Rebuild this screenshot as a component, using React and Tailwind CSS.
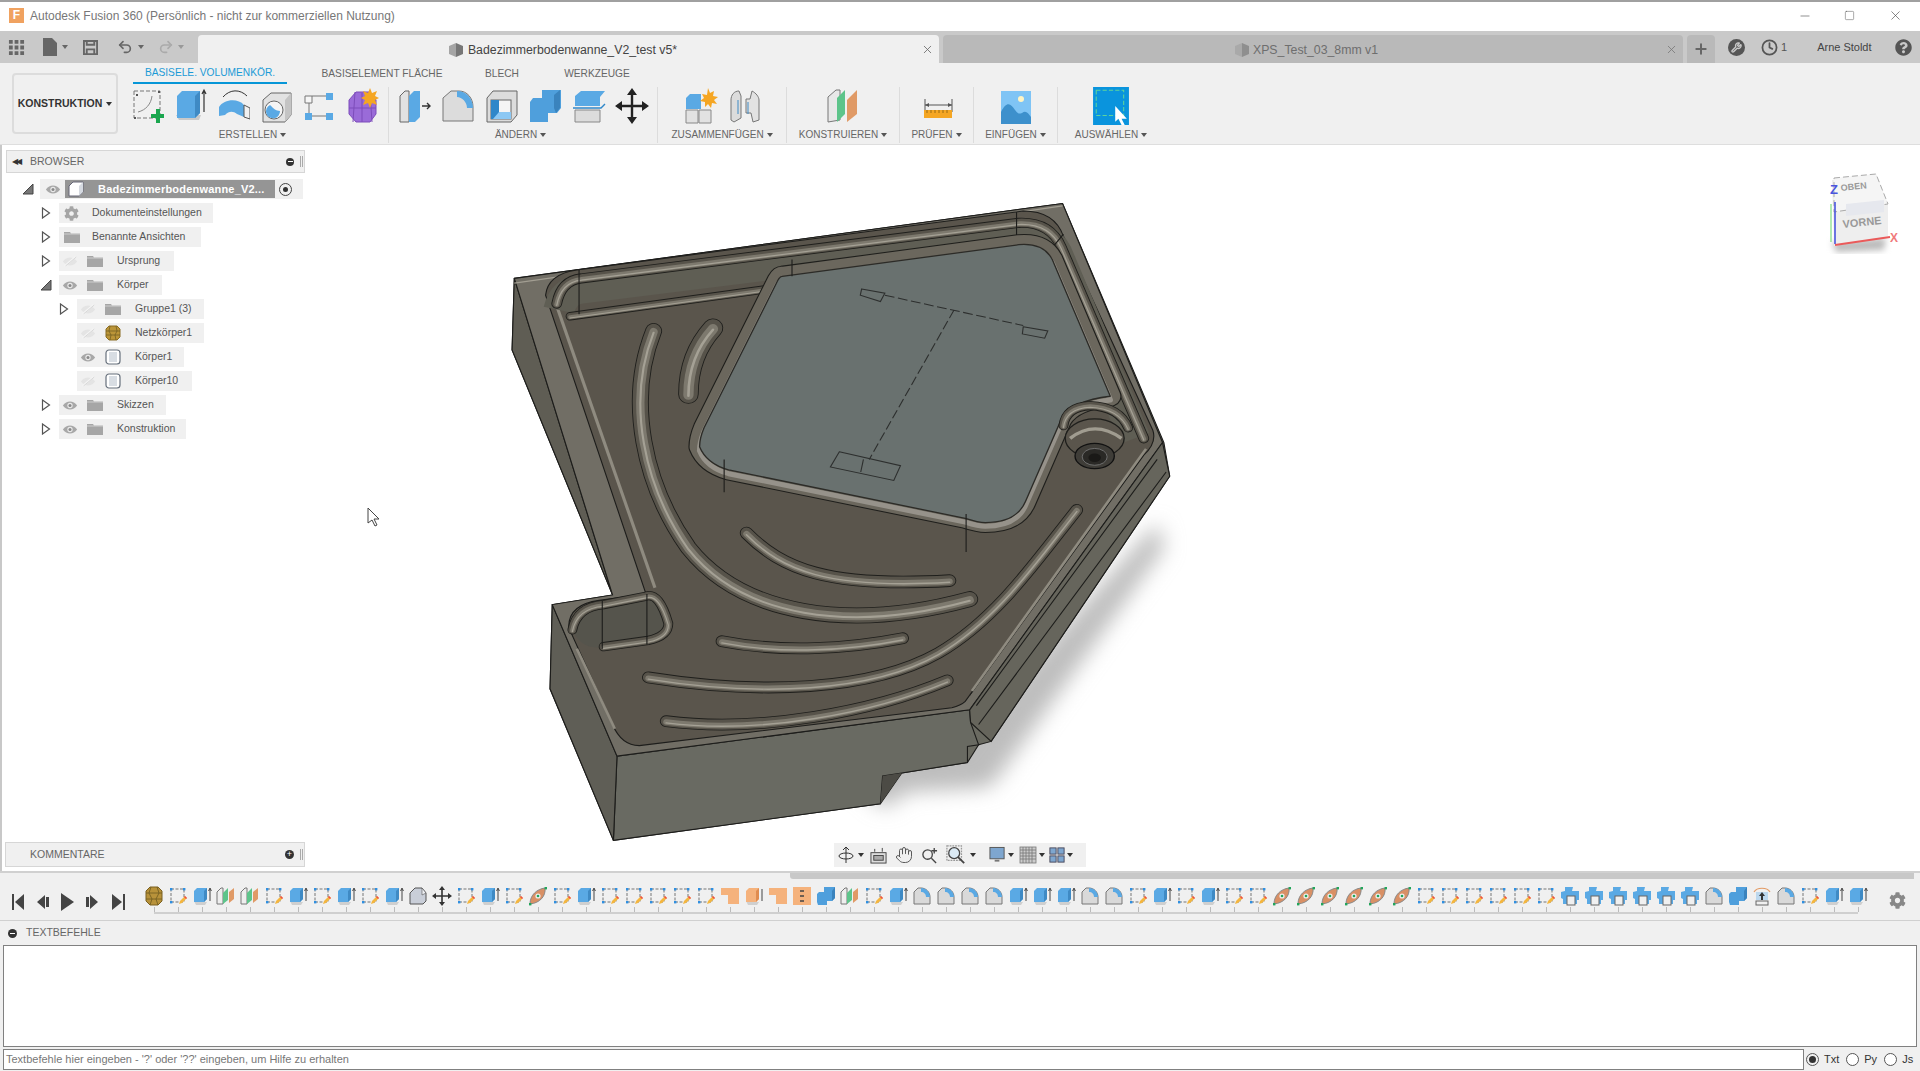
import React from 'react';
import { Minus, Square, X, Plus, Undo2, Redo2, Hand, Wrench, Clock } from 'lucide-react';
import { FaCog, FaQuestionCircle } from 'react-icons/fa';

const SK = 'sketch', EX = 'extrude', PL = 'plane', FI = 'fillet', LO = 'loft', CO = 'combine', CB = 'combineBox', OR = 'orange';

// timeline order, left to right
const timeline = [
  'mesh', SK, EX, PL, PL, SK, EX, SK, EX, SK, EX, 'chamfer', 'move', SK, EX, SK, LO, SK, EX, SK, SK, SK, SK, SK,
  OR, 'orangeBox', OR, 'orangeList', CO, PL, SK, EX, FI, FI, FI, FI, EX, EX, EX, FI, FI, SK, EX, SK, EX, SK, SK,
  LO, LO, LO, LO, LO, LO, SK, SK, SK, SK, SK, SK, CB, CB, CB, CB, CB, CB, FI, CO, 'arch', FI, SK, EX, EX,
];

function TimelineIcon({ kind }) {
  const cls = 'w-[20px] h-[20px] shrink-0';
  if (kind === 'sketch') {
    return (
      <svg viewBox="0 0 20 20" className={cls}>
        <rect x="3" y="3" width="13" height="13" fill="none" stroke="#777" strokeWidth="1" strokeDasharray="3 1.5" />
        <g fill="#2f8fe0">
          <rect x="2" y="2" width="2.4" height="2.4" />
          <rect x="15" y="2" width="2.4" height="2.4" />
          <rect x="2" y="15" width="2.4" height="2.4" />
        </g>
        <path d="M11 18l1-3 5-5 2 2-5 5z" fill="#f4b63f" />
        <path d="M17 10l2 2-1 1-2-2z" fill="#ee4b4b" />
      </svg>
    );
  }
  if (kind === 'extrude') {
    return (
      <svg viewBox="0 0 20 20" className={cls}>
        <path d="M2 15l2 4h9l2-3z" fill="#cfcfcf" />
        <path d="M2 5l3-3h10v11l-3 3H2z" fill="#5aa9e4" />
        <path d="M12 5l3-3v11l-3 3z" fill="#3f8ac4" />
        <path d="M18 15V3M16.6 5L18 2l1.4 3" stroke="#444" strokeWidth="1" fill="none" />
      </svg>
    );
  }
  if (kind === 'plane') {
    return (
      <svg viewBox="0 0 20 20" className={cls}>
        <path d="M1 18V6l4-4h2v16z" fill="#eee" stroke="#777" />
        <path d="M7 18V7l5-5v12z" fill="#5dc48a" />
        <path d="M13 17V6l5-4v11z" fill="#e09a66" />
      </svg>
    );
  }
  if (kind === 'fillet') {
    return (
      <svg viewBox="0 0 20 20" className={cls}>
        <path d="M2 18V6l4-4h3c5 0 9 4 9 9v7z" fill="#d9d9d9" stroke="#777" />
        <path d="M9 2c5 0 9 4 9 9h-4c0-3-2-5-5-5z" fill="#5aa9e4" />
      </svg>
    );
  }
  if (kind === 'chamfer') {
    return (
      <svg viewBox="0 0 20 20" className={cls}>
        <path d="M2 18V7l5-5h7l4 5v8l-3 3z" fill="#c9ced8" stroke="#555" />
        <path d="M14 2l4 5-4 2z" fill="#eef0f4" stroke="#555" strokeWidth=".6" />
      </svg>
    );
  }
  if (kind === 'move') {
    return (
      <svg viewBox="0 0 20 20" className={cls}>
        <path d="M10 2v16M2 10h16" stroke="#333" strokeWidth="1.6" />
        <path d="M10 0l3 4H7zM10 20l3-4H7zM0 10l4-3v6zM20 10l-4-3v6z" fill="#333" />
      </svg>
    );
  }
  if (kind === 'mesh') {
    return (
      <svg viewBox="0 0 20 20" className={cls}>
        <path d="M2 5l4-4h8l4 4v10l-4 4H6l-4-4z" fill="#b8923a" stroke="#7a6020" />
        <path d="M2 7l16 0M2 13h16M7 1l-2 6 3 6-2 6M13 1l2 6-3 6 2 6" fill="none" stroke="#6f5a20" strokeWidth=".8" />
      </svg>
    );
  }
  if (kind === 'loft') {
    return (
      <svg viewBox="0 0 20 20" className={cls}>
        <path d="M2 18C2 9 9 3 17 2c1 8-5 15-15 16z" fill="#d99065" stroke="#888" />
        <circle cx="10" cy="10" r="2.6" fill="#eee" />
        <circle cx="10" cy="10" r="1.3" fill="#22a55a" />
        <rect x="1" y="17" width="2.4" height="2.4" fill="#22a55a" />
        <rect x="16.6" y="1" width="2.4" height="2.4" fill="#22a55a" />
      </svg>
    );
  }
  if (kind === 'orange') {
    return (
      <svg viewBox="0 0 20 20" className={cls}>
        <path d="M1 2h18v16H8V9H1z" fill="#f5b27c" />
      </svg>
    );
  }
  if (kind === 'orangeBox') {
    return (
      <svg viewBox="0 0 20 20" className={cls}>
        <path d="M2 15l2 4h9l2-3z" fill="#cfcfcf" />
        <path d="M2 5l3-3h10v11l-3 3H2z" fill="#f5b27c" />
        <path d="M12 5l3-3v11l-3 3z" fill="#e08c4f" />
        <path d="M18 15V3" stroke="#444" />
      </svg>
    );
  }
  if (kind === 'orangeList') {
    return (
      <svg viewBox="0 0 20 20" className={cls}>
        <rect x="1" y="1" width="18" height="18" fill="#f5b27c" />
        <path d="M8 5h4M8 10h4M8 15h4" stroke="#444" strokeWidth="1.4" />
      </svg>
    );
  }
  if (kind === 'combine') {
    return (
      <svg viewBox="0 0 20 20" className={cls}>
        <path d="M8 1h11v11l-3 3h-5v4H2l-1-3V8l2-2h5z" fill="#4f9fdc" />
        <path d="M16 15V5l3-4v11z" fill="#3a83bd" />
      </svg>
    );
  }
  if (kind === 'combineBox') {
    return (
      <svg viewBox="0 0 20 20" className={cls}>
        <path d="M5 1h8l-1 4h7v9h-2v4H3v-5l-2-1V6l4-1z" fill="#5aa9e4" />
        <rect x="7" y="10" width="8" height="9" fill="#f0f0f0" stroke="#666" />
      </svg>
    );
  }
  return (
    <svg viewBox="0 0 20 20" className={cls}>
      <path d="M2 6c3-5 13-5 16 0" fill="none" stroke="#e39a63" strokeWidth="1.2" />
      <rect x="4" y="6" width="12" height="8" fill="#bcd8ee" />
      <path d="M10 6l3 4h-2v4H9v-4H7z" fill="#333" />
      <rect x="4" y="15" width="12" height="4" fill="#f0f0f0" stroke="#666" />
    </svg>
  );
}

function Caret({ className = 'border-t-[#555]' }) {
  return <span className={`inline-block w-0 h-0 border-x-[3px] border-x-transparent border-t-[4px] ${className}`} />;
}

function Sep() {
  return <div className="w-px h-[56px] bg-[#dcdcdc] shrink-0 mt-[2px]" />;
}

function Group({ label, width, row = 'justify-around', labelPad = '', children }) {
  return (
    <div className={`flex flex-col items-center shrink-0 ${width}`}>
      <div className={`flex items-center h-[42px] w-full ${row}`}>{children}</div>
      <div className={`h-[16px] flex items-center gap-[3px] text-[10px] leading-none text-[#666] ${labelPad}`}>
        {label} <Caret />
      </div>
    </div>
  );
}

function ToolIcon({ children, w = 'w-[34px]' }) {
  return (
    <svg viewBox="0 0 34 36" className={`${w} h-[38px] shrink-0`}>
      {children}
    </svg>
  );
}

function Eye({ off }) {
  if (off) {
    return (
      <svg viewBox="0 0 18 12" className="w-[16px] h-[11px]">
        <path d="M1 6c4-6 12-6 16 0-4 6-12 6-16 0z" fill="#e4e4e4" />
        <path d="M3 11L15 1" stroke="#f4f4f4" strokeWidth="2" />
        <path d="M4 11L16 1" stroke="#d4d4d4" />
      </svg>
    );
  }
  return (
    <svg viewBox="0 0 18 12" className="w-[16px] h-[11px]">
      <path d="M1 6c4-6 12-6 16 0-4 6-12 6-16 0z" fill="#a8a8a8" />
      <circle cx="9" cy="6" r="3" fill="#e9e9e9" />
      <circle cx="9" cy="6" r="1.7" fill="#8a8a8a" />
    </svg>
  );
}

function Tri({ open }) {
  if (open) {
    return (
      <svg viewBox="0 0 12 12" className="w-[12px] h-[12px]">
        <path d="M1 11L11 1v10z" fill="#777" stroke="#444" />
      </svg>
    );
  }
  return (
    <svg viewBox="0 0 12 12" className="w-[12px] h-[12px]">
      <path d="M2.5 1l7 5-7 5z" fill="#fff" stroke="#555" strokeWidth="1.2" />
    </svg>
  );
}

function Folder() {
  return (
    <svg viewBox="0 0 16 12" className="w-[16px] h-[12px]">
      <path d="M0 1h6l1 1.5h9V12H0z" fill="#a6a6a6" />
      <path d="M0 3h16" stroke="#e0e0e0" strokeWidth=".7" />
    </svg>
  );
}

function BodyIcon() {
  return (
    <svg viewBox="0 0 16 16" className="w-[16px] h-[16px]">
      <rect x="1" y="1" width="14" height="14" rx="3" fill="#fff" stroke="#67707c" strokeWidth="1.2" />
      <rect x="4" y="3" width="8" height="10" fill="#d8dde3" />
    </svg>
  );
}

function MeshIcon() {
  return (
    <svg viewBox="0 0 16 16" className="w-[16px] h-[16px]">
      <path d="M1 4l3-3h8l3 3v8l-3 3H4l-3-3z" fill="#bb9538" stroke="#8a6c22" />
      <path d="M1 6h14M1 10h14M5 1L4 6l2 4-1 5M11 1l1 5-2 4 1 5" stroke="#6f5a20" strokeWidth=".7" fill="none" />
    </svg>
  );
}

function Row({ level = 'ml-[38px]', width, tri, eye, icon, label }) {
  return (
    <div className="flex items-center h-[24px]">
      <div className={`${level} w-[19px] flex items-center shrink-0`}>{tri && <Tri open={tri === 'open'} />}</div>
      <div className={`${width} h-[20px] bg-[#f0f0f0] flex items-center shrink-0`}>
        {eye ? (
          <>
            <span className="w-[22px] flex justify-center">
              <Eye off={eye === 'off'} />
            </span>
            <span className="w-[28px] flex justify-center">{icon}</span>
          </>
        ) : (
          <span className="w-[25px] flex justify-center">{icon}</span>
        )}
        <span className="ml-[8px] text-[10.5px] text-[#555] whitespace-nowrap">{label}</span>
      </div>
    </div>
  );
}

function Tube({ d, w }) {
  return (
    <g fill="none" strokeLinecap="round" strokeLinejoin="round">
      <path d={d} stroke="#1f1f1c" strokeWidth={w + 4} />
      <path d={d} stroke="#57534a" strokeWidth={w} />
      <path d={d} stroke="#7d796e" strokeWidth={w * 0.55} transform="translate(0 2)" />
      <path d={d} stroke="#a5a195" strokeWidth={w * 0.14} transform="translate(0 4)" />
    </g>
  );
}

const TRAY = 'M650,205L1180,130Q1235,125 1255,165L1385,490Q1300,500 1275,545L1195,740Q1175,790 1105,790Q1090,790 1060,780L530,665Q480,650 465,610Q465,590 475,565L640,215Q645,205 650,205Z';

function Model() {
  const edge = { stroke: '#1d1d1b', strokeWidth: 2.5 };
  return (
    <svg viewBox="0 0 1568 1568" preserveAspectRatio="none" className="absolute left-[490px] top-[45px] w-[700px] h-[660px]">
      <defs>
        <filter id="shadow" x="-30%" y="-30%" width="160%" height="160%">
          <feGaussianBlur stdDeviation="24" />
        </filter>
      </defs>
      <polygon points="1490,790 1505,850 1130,1400 1110,1420 930,1430 880,1470 800,1400 1100,1250" fill="#bdbdbd" filter="url(#shadow)" />
      {/* outer faces */}
      <polygon points="50,210 1278,32 1505,600 1518,680 1118,1310 1090,1318 1065,1360 918,1385 870,1458 272,1545 130,1185 135,985 270,962 45,380" fill="#6a6a61" {...edge} />
      <polygon points="280,1345 1070,1235 1072,1265 1090,1318 1065,1322 1065,1360 918,1385 875,1392 870,1458 272,1545" fill="#696a62" {...edge} />
      <polygon points="918,1385 875,1392 870,1458" fill="#4c4b45" />
      <polygon points="135,985 280,1345 272,1545 130,1185" fill="#5f5e56" {...edge} />
      <polygon points="50,210 270,962 45,380" fill="#5f5d54" {...edge} />
      {/* top rim */}
      <polygon points="50,210 1278,32 1502,600 1070,1235 280,1345 135,985 270,962" fill="#716e65" {...edge} />
      <polygon points="1502,600 1518,680 1118,1310 1072,1265 1070,1235" fill="#66655c" {...edge} />
      <path d="M1490,640L1085,1225M1510,670L1090,1270M1470,610L1070,1200" fill="none" {...edge} />
      <path d="M50,215L1278,32" stroke="#a29e92" strokeWidth="3" transform="translate(0 6)" fill="none" />
      {/* recess */}
      <path d="M120,250Q125,200 190,190L1190,50Q1260,50 1280,110L1480,570Q1490,600 1460,630L1060,1215Q1050,1225 1030,1230L330,1320Q290,1320 270,1270L172,1040Q170,985 240,975L345,960L120,250Z" fill="#5a554c" {...edge} />
      <path d="M140,260L365,945" stroke="#8f8b80" strokeWidth="7" fill="none" />
      <path d="M190,1090L275,1280" stroke="#8f8b80" strokeWidth="6" fill="none" />
      <path d="M1465,615L1075,1190" stroke="#8f8b80" strokeWidth="6" fill="none" />
      {/* channel along the rim */}
      <path d="M150,285Q160,240 200,235L1180,105Q1240,100 1265,150L1440,590" fill="none" stroke="#5f5e54" strokeWidth="70" strokeLinejoin="round" />
      <Tube d="M145,270Q155,215 200,210L1180,78Q1250,75 1275,135L1460,590" w={20} />
      <Tube d="M175,300L640,232" w={16} />
      <path d="M195,190V295M1175,52V130M1280,105L1245,150" fill="none" {...edge} />
      {/* notch at lower left */}
      <path d="M180,1045Q190,990 250,985L345,965Q375,955 395,1030Q395,1060 350,1070L250,1085Q200,1095 180,1045Z" fill="#55544c" />
      <Tube d="M180,1045Q190,990 250,985L345,965Q375,955 395,1030Q395,1060 350,1070L250,1085" w={18} />
      <path d="M247,975V1090M347,960V1080" fill="none" {...edge} />
      {/* grooves */}
      <Tube d="M362,335C300,500 340,700 440,850C560,1010 800,1050 1070,972" w={34} />
      <Tube d="M495,328C455,375 440,430 440,485" w={42} />
      <Tube d="M570,815C650,900 750,945 1025,928" w={26} />
      <Tube d="M515,1072C650,1100 800,1090 920,1065" w={24} />
      <Tube d="M350,1158C600,1200 850,1190 1000,1100C1130,1020 1220,880 1310,760" w={24} />
      <Tube d="M390,1262C600,1290 850,1240 1020,1165" w={24} />
      {/* tray */}
      <path d={TRAY} fill="#69716f" stroke="#1f1f1c" strokeWidth="50" strokeLinejoin="round" />
      <path d={TRAY} fill="#69716f" stroke="#6b675d" strokeWidth="45" strokeLinejoin="round" />
      <path d={TRAY} fill="none" stroke="#96928a" strokeWidth="12" strokeLinejoin="round" transform="translate(0 9)" />
      <path d={TRAY} fill="#69716f" stroke="#2c2b27" strokeWidth="3" strokeLinejoin="round" />
      <path d="M520,640V718M1062,770V860M672,165V205" fill="none" {...edge} />
      {/* sink marks */}
      <g fill="none" stroke="#2d2f2e" strokeWidth="2.5">
        <polygon points="828,235 880,245 870,265 825,250" />
        <polygon points="1190,325 1245,335 1238,352 1188,342" />
        <polygon points="778,622 915,655 900,690 758,658" />
        <path d="M832,640L826,670" />
        <path d="M880,250L1190,322M1035,285L845,640" strokeDasharray="22 8" />
      </g>
      {/* drain */}
      <ellipse cx="1350" cy="590" rx="66" ry="46" fill="#5a554c" stroke="#1f1f1c" strokeWidth="3" />
      <Tube d="M1280,560Q1285,515 1340,512Q1405,515 1425,565" w={18} />
      <path d="M1295,590Q1350,545 1410,590" fill="none" stroke="#a09c90" strokeWidth="8" />
      <ellipse cx="1350" cy="632" rx="44" ry="30" fill="#3f3d38" stroke="#111" strokeWidth="3" />
      <ellipse cx="1350" cy="634" rx="28" ry="20" fill="#2a2926" stroke="#777" strokeWidth="2" />
      <ellipse cx="1350" cy="636" rx="14" ry="10" fill="#1a1917" />
    </svg>
  );
}

function ViewCube() {
  return (
    <svg viewBox="0 0 80 84" className="absolute left-[1824px] top-[27px] w-[80px] h-[84px]">
      <defs>
        <filter id="cubeShadow">
          <feGaussianBlur stdDeviation="3" />
        </filter>
      </defs>
      <polygon points="6,70 60,66 58,78 10,80" fill="#bbb" filter="url(#cubeShadow)" />
      <polygon points="6,8 50,2 62,32 62,64 8,74" fill="#eeeeee" />
      <polygon points="8,6 50,2 62,32 8,40" fill="#f5f5f5" stroke="#aaa" strokeDasharray="6 3" />
      <polygon points="20,32 58,28 58,40 20,44" fill="#e6e8ee" />
      <text x="15" y="19" fontSize="9" fontWeight="bold" fill="#999" fontFamily="Liberation Sans" transform="rotate(-6 15 19)">OBEN</text>
      <text x="17" y="56" fontSize="11" fontWeight="bold" fill="#999" fontFamily="Liberation Sans" transform="rotate(-6 17 56)">VORNE</text>
      <path d="M9 30V72" stroke="#4a55dd" strokeWidth="1.6" />
      <path d="M5 32V70" stroke="#9fe59f" strokeWidth="1.6" />
      <path d="M9 73L64 65" stroke="#ea5a5a" strokeWidth="2" />
      <text x="4" y="22" fontSize="13" fontWeight="bold" fill="#4a55dd" fontFamily="Liberation Sans">Z</text>
      <text x="64" y="70" fontSize="12" fontWeight="bold" fill="#f07a7a" fontFamily="Liberation Sans">X</text>
    </svg>
  );
}

export default function App() {
  return (
    <div className="w-[1920px] h-[1071px] flex flex-col overflow-hidden bg-white font-['Liberation_Sans',Arial,sans-serif]">
      {/* title bar */}
      <div className="h-[31px] shrink-0 border-t-2 border-[#a0a0a0] flex items-center bg-white pb-[2px]">
        <div className="ml-[9px] w-[15px] h-[15px] bg-[#f0a260] text-white text-[12px] font-bold leading-[15px] text-center">F</div>
        <div className="ml-[6px] text-[12px] text-[#777]">Autodesk Fusion 360 (Persönlich - nicht zur kommerziellen Nutzung)</div>
        <div className="ml-auto flex items-center text-[#444]">
          <Minus className="w-[14px] h-[14px] mr-[32px]" strokeWidth={1} />
          <Square className="w-[11px] h-[11px] mr-[33px]" strokeWidth={1} />
          <X className="w-[15px] h-[15px] mr-[17px]" strokeWidth={1} />
        </div>
      </div>

      {/* tab bar */}
      <div className="h-[32px] shrink-0 bg-[#c9c9c9] flex items-end">
        <div className="w-[198px] h-full flex items-center text-[#666] shrink-0">
          <svg viewBox="0 0 18 18" className="ml-[8px] w-[17px] h-[17px]" fill="#666">
            <path d="M1 1h4v4H1zM7 1h4v4H7zM13 1h4v4h-4zM1 7h4v4H1zM7 7h4v4H7zM13 7h4v4h-4zM1 13h4v4H1zM7 13h4v4H7zM13 13h4v4h-4z" />
          </svg>
          <svg viewBox="0 0 14 18" className="ml-[18px] w-[14px] h-[18px]" fill="#666">
            <path d="M0 0h9l5 5v13H0z" />
          </svg>
          <Caret className="border-t-[#666] ml-[5px]" />
          <svg viewBox="0 0 16 16" className="ml-[15px] w-[15px] h-[15px]" fill="none" stroke="#666" strokeWidth="2">
            <path d="M1 1h14v14H1zM4 1v4h8V1M4 15v-5h8v5" />
          </svg>
          <Undo2 className="ml-[19px] w-[16px] h-[16px]" strokeWidth={2.5} />
          <Caret className="border-t-[#666] ml-[5px]" />
          <Redo2 className="ml-[14px] w-[16px] h-[16px] text-[#aaa]" strokeWidth={2.5} />
          <Caret className="border-t-[#999] ml-[4px]" />
        </div>
        <div className="relative w-[741px] h-[28px] bg-[#f0f0f0] rounded-t-[4px] flex items-center justify-center gap-[4px] pt-[2px] pr-[12px] shrink-0">
          <svg viewBox="0 0 16 16" className="w-[16px] h-[16px]">
            <path d="M8 1l7 3v8l-7 3z" fill="#777" />
            <path d="M8 1L1 4v8l7 3z" fill="#a5a5a5" />
          </svg>
          <span className="text-[12.3px] text-[#444]">Badezimmerbodenwanne_V2_test v5*</span>
          <X className="absolute right-[5px] top-[8px] w-[13px] h-[13px] text-[#666]" strokeWidth={1.5} />
        </div>
        <div className="relative ml-[4px] w-[740px] h-[28px] bg-[#b9b9b9] rounded-t-[4px] flex items-center justify-center gap-[3px] pt-[2px] pr-[14px] shrink-0">
          <svg viewBox="0 0 16 16" className="w-[16px] h-[16px]">
            <path d="M8 1l7 3v8l-7 3z" fill="#8f8f8f" />
            <path d="M8 1L1 4v8l7 3z" fill="#a9a9a9" />
          </svg>
          <span className="text-[12.3px] text-[#6e6e6e]">XPS_Test_03_8mm v1</span>
          <X className="absolute right-[5px] top-[8px] w-[13px] h-[13px] text-[#777]" strokeWidth={1.5} />
        </div>
        <div className="ml-[4px] w-[28px] h-[28px] bg-[#b9b9b9] rounded-t-[4px] flex items-center justify-center shrink-0">
          <Plus className="w-[16px] h-[16px] text-[#666]" strokeWidth={3} />
        </div>
        <div className="flex-1 h-full flex items-center text-[#555]">
          <div className="ml-[13px] w-[17px] h-[17px] rounded-full bg-[#555] flex items-center justify-center">
            <Wrench className="w-[11px] h-[11px] text-[#c9c9c9]" strokeWidth={3} />
          </div>
          <Clock className="ml-[16px] w-[17px] h-[17px]" strokeWidth={2.5} />
          <span className="ml-[3px] text-[11px]">1</span>
          <span className="ml-[30px] text-[11px] text-[#444]">Arne Stoldt</span>
          <FaQuestionCircle className="ml-[23px] w-[17px] h-[17px]" />
        </div>
      </div>

      {/* ribbon */}
      <div className="h-[82px] shrink-0 bg-[#f0f0f0] border-b border-[#dedede] flex">
        <div className="ml-[12px] mt-[10px] w-[106px] h-[61px] border-2 border-[#dcdcdc] rounded-[4px] flex items-center justify-center gap-[4px] shrink-0">
          <span className="text-[10.5px] font-bold text-[#333]">KONSTRUKTION</span>
          <Caret className="border-t-[#333]" />
        </div>
        <div className="ml-[7px] flex flex-col">
          <div className="h-[22px] flex items-start text-[10.2px] text-[#666]">
            <div className="w-[154px] ml-[8px] h-[21px] flex items-center justify-center border-b-2 border-[#0696d7] text-[#1b9ad6]">BASISELE. VOLUMENKÖR.</div>
            <div className="ml-[25px] w-[140px] h-[21px] flex items-center justify-center">BASISELEMENT FLÄCHE</div>
            <div className="ml-[30px] w-[40px] h-[21px] flex items-center justify-center">BLECH</div>
            <div className="ml-[35px] w-[80px] h-[21px] flex items-center justify-center">WERKZEUGE</div>
          </div>
          <div className="flex">
            <Group label="ERSTELLEN" width="w-[263px]" row="justify-start gap-[9px] pl-[5px]" labelPad="pr-[8px]">
              <ToolIcon>
                <rect x="4" y="3" width="26" height="27" fill="none" stroke="#777" strokeDasharray="4 2" />
                <path d="M6 6h2v2H6zM28 3h2v2h-2zM4 29h2v2H4z" fill="#555" />
                <path d="M8 24c8-2 13-8 14-16" stroke="#888" fill="none" />
                <path d="M21 26h5v-5h4v5h4v4h-4v5h-4v-5h-5z" fill="#1aa64e" />
              </ToolIcon>
              <ToolIcon>
                <path d="M3 27l3 5h20l2-5z" fill="#c9c9c9" />
                <path d="M4 8l5-5h18v22l-5 5H4z" fill="#5aa9e4" />
                <path d="M22 8l5-5v22l-5 5z" fill="#3f8ac4" />
                <path d="M31 24V2M29 6l2-4 2 4" stroke="#333" strokeWidth="1.2" fill="none" />
              </ToolIcon>
              <ToolIcon>
                <path d="M7 9C14 1 24 1 31 8" stroke="#333" fill="none" />
                <path d="M3 28V19C8 11 22 10 28 17v12l-7-3C17 23 13 23 9 27z" fill="#5aa9e4" />
                <path d="M28 17l6 3v11l-6-2z" fill="#f0f0f0" stroke="#555" />
              </ToolIcon>
              <ToolIcon>
                <path d="M4 12l8-7h20v22l-6 7H4z" fill="#e2e2e2" stroke="#666" />
                <path d="M26 12l6-7v22l-6 7z" fill="#c4c4c4" />
                <circle cx="15" cy="22" r="9" fill="#f5f5f5" stroke="#666" />
                <path d="M11 17a7 7 0 1 0 10 6c-4 0-7-3-10-6z" fill="#5aa9e4" />
              </ToolIcon>
              <ToolIcon>
                <path d="M3 8h7v7H3z" fill="#f6f6f6" stroke="#777" />
                <path d="M24 5h7v7h-7zM3 25h7v7H3zM24 25h7v7h-7z" fill="#5aa9e4" />
                <path d="M10 8h14M7 15v10M10 28h14" stroke="#777" />
              </ToolIcon>
              <ToolIcon>
                <path d="M4 12l7-8h14l6 8v14l-6 8H11l-7-8z" fill="#9a6bd8" stroke="#7d4dbb" />
                <path d="M4 20h27M17 5v29M10 4l-2 30M25 4l2 30" stroke="#7d4dbb" fill="none" />
                <path d="M25 0l2 5 5-2-2 5 4 2-4 2 2 5-5-2-2 5-2-5-5 2 2-5-4-2 4-2-2-5 5 2z" fill="#f5a623" />
              </ToolIcon>
            </Group>
            <Sep />
            <Group label="ÄNDERN" width="w-[268px]" row="justify-start gap-[9.4px] pl-[9px]" labelPad="pr-[5px]">
              <ToolIcon>
                <path d="M2 34V8l5-5h4v31z" fill="#e2e2e2" stroke="#666" />
                <path d="M11 34V8l5-5h6v26l-5 5z" fill="#5aa9e4" />
                <path d="M24 18h8M29 15l3 3-3 3" stroke="#333" strokeWidth="1.4" fill="none" />
              </ToolIcon>
              <ToolIcon>
                <path d="M2 33V10l8-7h8c8 0 14 7 14 16v14z" fill="#dcdcdc" stroke="#777" />
                <path d="M16 3c9 0 16 7 16 17h-6c0-6-5-11-10-11z" fill="#5aa9e4" />
              </ToolIcon>
              <ToolIcon>
                <path d="M2 10l6-7h24v24l-6 7H2z" fill="#dcdcdc" stroke="#666" />
                <rect x="6" y="12" width="20" height="19" fill="#f5f5f5" stroke="#666" />
                <path d="M6 12h8v12h12v7H6z" fill="#2f87c9" />
                <path d="M14 24h12v7H8z" fill="#8cc8f4" />
              </ToolIcon>
              <ToolIcon>
                <path d="M14 2h19v18l-4 5h-9v9H2l0-4V14l3-4h9z" fill="#4f9fdc" />
                <path d="M26 20V7l6-5v18l-4 5z" fill="#3a83bd" />
              </ToolIcon>
              <ToolIcon>
                <path d="M3 8l6-5h24l-5 6v9H3z" fill="#5aa9e4" />
                <path d="M3 22h25v12H3z" fill="#dcdcdc" stroke="#888" />
                <path d="M1 20h28l4-4" stroke="#2f87c9" strokeWidth="1.4" fill="none" />
              </ToolIcon>
              <ToolIcon>
                <path d="M17 4v28M3 18h28" stroke="#222" strokeWidth="2.4" />
                <path d="M17 0l5 7H12zM17 36l5-7H12zM0 18l7-5v10zM34 18l-7-5v10z" fill="#222" />
              </ToolIcon>
            </Group>
            <Sep />
            <Group label="ZUSAMMENFÜGEN" width="w-[128px]" row="justify-center gap-[10px] pl-[2px]">
              <ToolIcon>
                <path d="M2 10l4-4h11v15H2z" fill="#5aa9e4" />
                <path d="M2 22h12v13H2zM15 22h12v13H15z" fill="#e2e2e2" stroke="#888" />
                <path d="M24 0l2 5 4-2-1 5 5 1-4 3 3 4-5-1-1 5-3-4-3 3v-5l-5-1 4-3-2-4 5 1z" fill="#f5a623" />
              </ToolIcon>
              <ToolIcon>
                <path d="M3 32V12c0-5 3-9 8-9l2 5v22l-7 4z" fill="#dcdcdc" stroke="#777" />
                <path d="M31 32V12c0-3-3-7-7-9l-2 8h-4v14h5l2 9z" fill="#e2e2e2" stroke="#777" />
                <path d="M10 12v14M20 14v12" stroke="#3f8ac4" />
              </ToolIcon>
            </Group>
            <Sep />
            <Group label="KONSTRUIEREN" width="w-[112px]">
              <ToolIcon>
                <path d="M2 34V9l8-7h4v30z" fill="#e8e8e8" stroke="#777" />
                <path d="M11 34V10l8-8v24z" fill="#5dc48a" />
                <path d="M21 34V12l10-10v24z" fill="#e09a66" />
              </ToolIcon>
            </Group>
            <Sep />
            <Group label="PRÜFEN" width="w-[73px]">
              <ToolIcon>
                <path d="M5 11v13M32 11v13M5 17h27" stroke="#555" />
                <path d="M5 17l4-2v4zM32 17l-4-2v4z" fill="#555" />
                <rect x="4" y="22" width="28" height="8" fill="#f5a623" />
                <path d="M7 22v3M11 22v3M15 22v3M19 22v3M23 22v3M27 22v3" stroke="#9a6b12" />
              </ToolIcon>
            </Group>
            <Sep />
            <Group label="EINFÜGEN" width="w-[83px]">
              <ToolIcon>
                <rect x="2" y="3" width="30" height="33" fill="#7fc4f5" />
                <path d="M2 36V24c6-12 10-8 14-2 3 4 4 4 7 3 4-3 6 0 9 4v7z" fill="#3d90cc" />
                <circle cx="22" cy="11" r="3" fill="#fff4c4" />
              </ToolIcon>
            </Group>
            <Sep />
            <Group label="AUSWÄHLEN" width="w-[106px]">
              <ToolIcon w="w-[38px]">
                <rect x="0" y="0" width="34" height="36" fill="#0a94dd" />
                <rect x="3" y="3" width="26" height="24" fill="none" stroke="#5ed49c" strokeDasharray="4 2" />
                <path d="M21 18l11 12-5 0 3 6-3 0-3-6-3 3z" fill="#fff" />
              </ToolIcon>
            </Group>
          </div>
        </div>
      </div>

      {/* canvas */}
      <div className="relative flex-1 min-h-0 bg-white border-l-2 border-[#c8c8c8] flex flex-col justify-between">
        <Model />
        <ViewCube />
        <div className="relative">
          <div className="mt-[5px] ml-[4px] w-[299px] h-[23px] bg-[#f0f0f0] border border-[#d6d6d6] flex items-center">
            <span className="ml-[5px] text-[8px] text-[#333] tracking-[-2px]">◀◀</span>
            <span className="ml-[10px] text-[10.5px] text-[#666]">BROWSER</span>
            <span className="ml-auto w-[8px] h-[8px] rounded-full bg-[#333] flex items-center justify-center">
              <span className="w-[5px] h-px bg-white" />
            </span>
            <span className="ml-[6px] mr-[1px] w-[3px] h-[11px] border-x border-[#aaa]" />
          </div>
          <div className="pt-[4px]">
            <div className="flex items-center h-[24px]">
              <div className="ml-[20px] w-[18px] flex items-center shrink-0"><Tri open /></div>
              <div className="w-[263px] h-[20px] bg-[#f0f0f0] flex items-center shrink-0">
                <span className="w-[25px] flex justify-center"><Eye /></span>
                <div className="w-[210px] h-[18px] bg-[#959595] flex items-center">
                  <svg viewBox="0 0 16 16" className="ml-[3px] w-[16px] h-[16px]">
                    <path d="M1 5l4-4h10v10l-4 4H1z" fill="#fff" stroke="#667" />
                    <path d="M11 5l4-4v10l-4 4z" fill="#d5d9e0" />
                  </svg>
                  <span className="ml-[14px] text-[11px] font-bold text-white tracking-[0.2px] whitespace-nowrap">Badezimmerbodenwanne_V2...</span>
                </div>
                <span className="ml-[4px] w-[13px] h-[13px] rounded-full border border-[#444] flex items-center justify-center">
                  <span className="w-[5px] h-[5px] rounded-full bg-[#333]" />
                </span>
              </div>
            </div>
            <Row width="w-[154px]" tri="closed" icon={<FaCog className="w-[15px] h-[15px] text-[#a5a5a5]" />} label="Dokumenteinstellungen" />
            <Row width="w-[142px]" tri="closed" icon={<Folder />} label="Benannte Ansichten" />
            <Row width="w-[115px]" tri="closed" eye="off" icon={<Folder />} label="Ursprung" />
            <Row width="w-[103px]" tri="open" eye="on" icon={<Folder />} label="Körper" />
            <Row level="ml-[56px]" width="w-[127px]" tri="closed" eye="off" icon={<Folder />} label="Gruppe1 (3)" />
            <Row level="ml-[56px]" width="w-[127px]" eye="off" icon={<MeshIcon />} label="Netzkörper1" />
            <Row level="ml-[56px]" width="w-[107px]" eye="on" icon={<BodyIcon />} label="Körper1" />
            <Row level="ml-[56px]" width="w-[115px]" eye="off" icon={<BodyIcon />} label="Körper10" />
            <Row width="w-[107px]" tri="closed" eye="on" icon={<Folder />} label="Skizzen" />
            <Row width="w-[127px]" tri="closed" eye="on" icon={<Folder />} label="Konstruktion" />
          </div>
        </div>

        <svg viewBox="0 0 14 20" className="absolute left-[365px] top-[362px] w-[14px] h-[20px]">
          <path d="M1 1v15l4-3 3 6 2-1-3-6h5z" fill="#fff" stroke="#444" />
        </svg>

        <div className="absolute left-[832px] bottom-[4px] w-[252px] h-[24px] bg-[#f0f0f0] flex items-center text-[#555]">
          <svg viewBox="0 0 18 18" className="ml-[3px] w-[18px] h-[18px]" fill="none" stroke="#333">
            <path d="M9 1v16M6 4l3-3 3 3" />
            <ellipse cx="9" cy="10" rx="7" ry="3" />
          </svg>
          <Caret className="border-t-[#333] ml-[3px]" />
          <svg viewBox="0 0 18 18" className="ml-[6px] w-[17px] h-[17px]" fill="#ddd" stroke="#444">
            <rect x="1" y="6" width="16" height="11" />
            <rect x="4" y="9" width="10" height="5" fill="#aaa" />
            <path d="M5 5V2M13 5V1" />
          </svg>
          <Hand className="ml-[8px] w-[18px] h-[18px]" strokeWidth={1.3} />
          <svg viewBox="0 0 18 18" className="ml-[8px] w-[17px] h-[17px]" fill="none" stroke="#444" strokeWidth="1.4">
            <circle cx="7" cy="8" r="5" />
            <path d="M11 12l5 5M14 1v6M11 4h6" />
          </svg>
          <svg viewBox="0 0 22 22" className="ml-[8px] w-[20px] h-[20px]" fill="#dbeaf5" stroke="#444" strokeWidth="1.4">
            <rect x="1" y="1" width="16" height="16" fill="none" stroke="#999" strokeDasharray="2 1" />
            <circle cx="9" cy="9" r="6" />
            <path d="M13 13l7 7" strokeWidth="2" />
          </svg>
          <Caret className="border-t-[#333] ml-[4px]" />
          <svg viewBox="0 0 18 18" className="ml-[13px] w-[17px] h-[18px]">
            <rect x="1" y="1" width="15" height="12" fill="#7ea6cf" stroke="#555" />
            <path d="M6 14h5v2H6z" fill="#777" />
          </svg>
          <Caret className="border-t-[#333] ml-[2px]" />
          <svg viewBox="0 0 18 18" className="ml-[5px] w-[18px] h-[18px]" stroke="#777" strokeWidth=".8">
            <rect x="1" y="1" width="16" height="16" fill="#ccc" />
            <path d="M4 1v16M7 1v16M10 1v16M13 1v16M1 4h16M1 7h16M1 10h16M1 13h16" />
          </svg>
          <Caret className="border-t-[#333] ml-[2px]" />
          <svg viewBox="0 0 18 18" className="ml-[4px] w-[16px] h-[16px]" fill="#7ea6cf" stroke="#445">
            <rect x="1" y="1" width="7" height="7" />
            <rect x="10" y="1" width="7" height="7" />
            <rect x="1" y="10" width="7" height="7" />
            <rect x="10" y="10" width="7" height="7" />
          </svg>
          <Caret className="border-t-[#333] ml-[2px]" />
        </div>

        <div className="relative mb-[4px] ml-[3px] w-[300px] h-[25px] bg-[#f0f0f0] border border-[#d6d6d6] flex items-center">
          <span className="ml-[24px] text-[10.5px] text-[#666]">KOMMENTARE</span>
          <span className="ml-auto w-[9px] h-[9px] rounded-full bg-[#333] text-white text-[9px] leading-[9px] text-center">+</span>
          <span className="ml-[6px] mr-[1px] w-[3px] h-[11px] border-x border-[#aaa]" />
        </div>
      </div>

      {/* timeline */}
      <div className="h-[49px] shrink-0 bg-[#f0f0f0] border-t-2 border-[#d0d0d0] flex flex-col relative">
        <div className="ml-[790px] h-[6px] bg-[#c8c8c8] rounded-bl-[3px] mr-[6px]" />
        <div className="flex h-[41px]">
          <svg viewBox="0 0 115 20" className="ml-[11px] mt-[13px] w-[115px] h-[20px] shrink-0" fill="#444">
            <path d="M1 2h2v16H1zM13 2v16L4 10z" />
            <path d="M26 10l8-7v14zM35 5h3v10h-3z" />
            <path d="M50 1l13 9-13 9z" />
            <path d="M75 5h3v10h-3zM79 3l8 7-8 7z" />
            <path d="M101 2l10 8-10 8zM112 2h2v16h-2z" />
          </svg>
          <div className="ml-[20px] flex flex-col">
            <div className="flex gap-[4px] mt-[7px] ml-[-2px]">
              {timeline.map((kind, i) => (
                <TimelineIcon key={i} kind={kind} />
              ))}
            </div>
            <div className="flex ml-[8px] mt-[1px] w-[1704px] h-[7px] border-b-2 border-[#cfcfcf]">
              {timeline.map((_, i) => (
                <div key={i} className="w-[24px] h-[5px] border-l border-[#bbb] shrink-0" />
              ))}
            </div>
          </div>
          <FaCog className="ml-auto mr-[14px] mt-[13px] w-[17px] h-[17px] text-[#888] shrink-0" />
        </div>
      </div>

      {/* text commands */}
      <div className="flex-none h-[151px] bg-[#f0f0f0] border-t border-[#d0d0d0] flex flex-col">
        <div className="h-[24px] flex items-center shrink-0">
          <span className="ml-[8px] w-[9px] h-[9px] rounded-full bg-[#333] flex items-center justify-center">
            <span className="w-[5px] h-px bg-white" />
          </span>
          <span className="ml-[9px] text-[10.5px] text-[#666]">TEXTBEFEHLE</span>
        </div>
        <div className="mx-[3px] h-[102px] bg-white border border-[#808080] shrink-0" />
        <div className="mt-[2px] flex items-center">
          <div className="ml-[3px] w-[1801px] h-[21px] bg-white border border-[#808080] flex items-center pl-[2px] text-[11px] text-[#777] shrink-0">
            Textbefehle hier eingeben - '?' oder '??' eingeben, um Hilfe zu erhalten
          </div>
          <div className="flex-1 flex items-center text-[11px] text-[#333]">
            <span className="ml-[2px] w-[13px] h-[13px] rounded-full border border-[#555] flex items-center justify-center">
              <span className="w-[7px] h-[7px] rounded-full bg-[#333]" />
            </span>
            <span className="ml-[5px]">Txt</span>
            <span className="ml-[7px] w-[13px] h-[13px] rounded-full border border-[#555] bg-white" />
            <span className="ml-[5px]">Py</span>
            <span className="ml-[7px] w-[13px] h-[13px] rounded-full border border-[#555] bg-white" />
            <span className="ml-[5px]">Js</span>
          </div>
        </div>
      </div>
    </div>
  );
}
